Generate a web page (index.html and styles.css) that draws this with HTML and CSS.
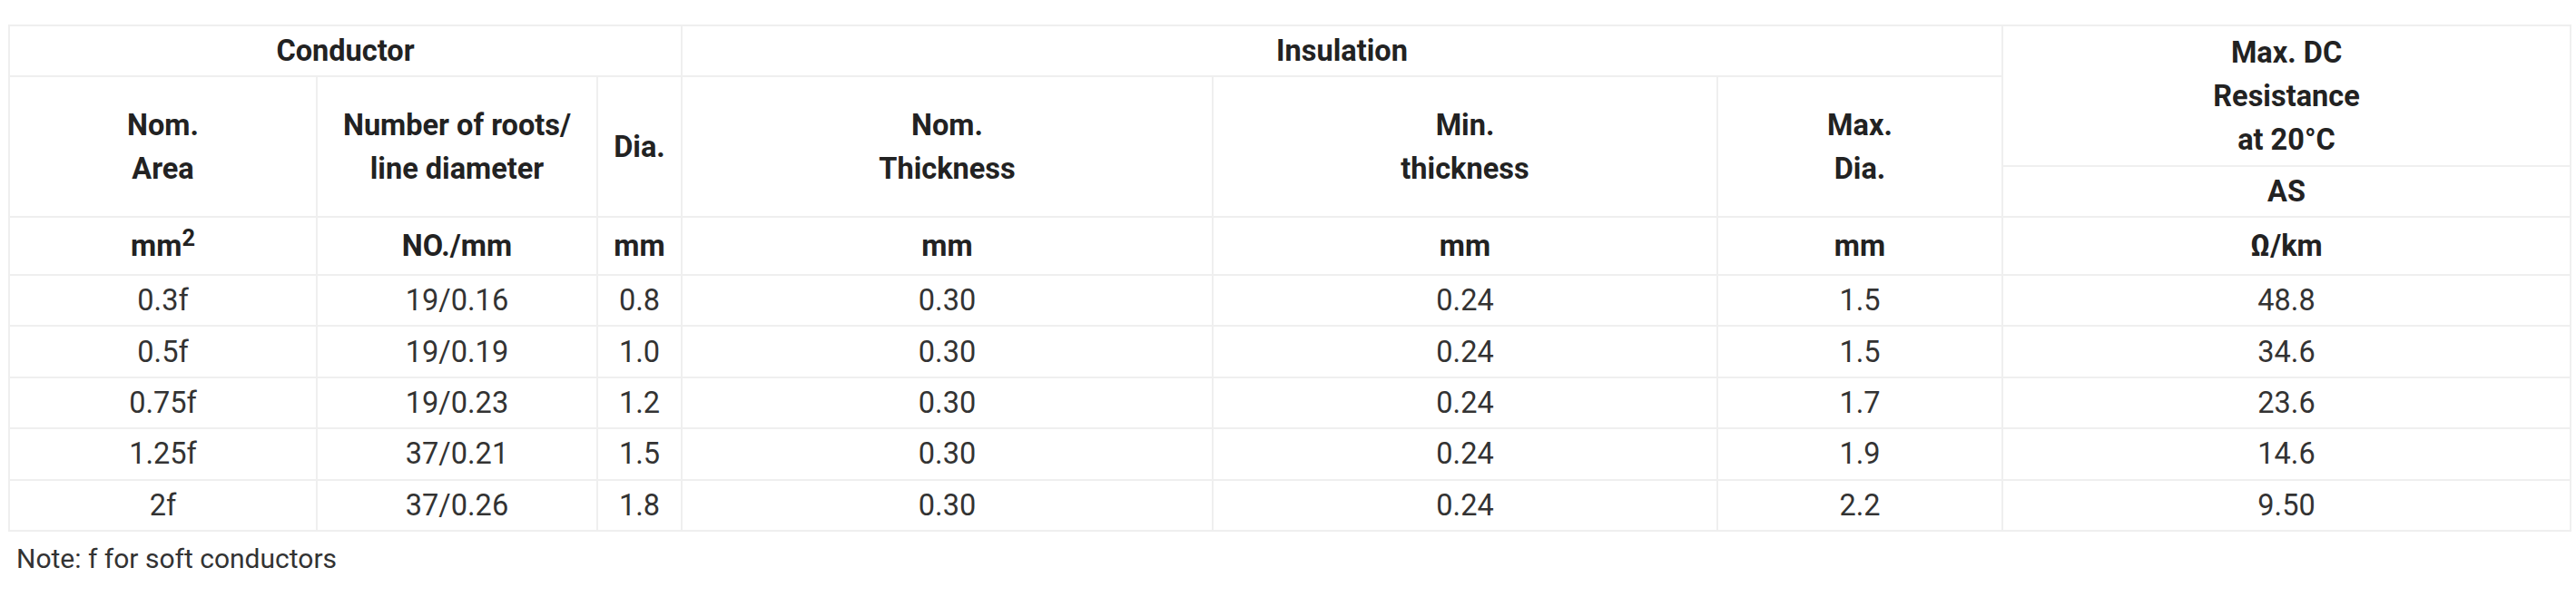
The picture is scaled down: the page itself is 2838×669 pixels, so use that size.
FILE: index.html
```html
<!DOCTYPE html>
<html lang="en">
<head>
<meta charset="utf-8">
<title>Cable specification</title>
<link rel="stylesheet" href="styles.css">
</head>
<body>
<div class="page">
  <table class="spec">
    <colgroup>
      <col class="c1"><col class="c2"><col class="c3"><col class="c4"><col class="c5"><col class="c6"><col class="c7">
    </colgroup>
    <thead>
      <tr class="r1">
        <th colspan="3">Conductor</th>
        <th colspan="3">Insulation</th>
        <th rowspan="2" class="multi">Max. DC<br>Resistance<br>at 20°C</th>
      </tr>
      <tr class="r2">
        <th rowspan="2" class="multi">Nom.<br>Area</th>
        <th rowspan="2" class="multi">Number of roots/<br>line diameter</th>
        <th rowspan="2">Dia.</th>
        <th rowspan="2" class="multi">Nom.<br>Thickness</th>
        <th rowspan="2" class="multi">Min.<br>thickness</th>
        <th rowspan="2" class="multi">Max.<br>Dia.</th>
      </tr>
      <tr class="r3">
        <th>AS</th>
      </tr>
      <tr class="units">
        <th>mm<sup>2</sup></th>
        <th>NO./mm</th>
        <th>mm</th>
        <th>mm</th>
        <th>mm</th>
        <th>mm</th>
        <th>Ω/km</th>
      </tr>
    </thead>
    <tbody>
      <tr><td>0.3f</td><td>19/0.16</td><td>0.8</td><td>0.30</td><td>0.24</td><td>1.5</td><td>48.8</td></tr>
      <tr><td>0.5f</td><td>19/0.19</td><td>1.0</td><td>0.30</td><td>0.24</td><td>1.5</td><td>34.6</td></tr>
      <tr><td>0.75f</td><td>19/0.23</td><td>1.2</td><td>0.30</td><td>0.24</td><td>1.7</td><td>23.6</td></tr>
      <tr><td>1.25f</td><td>37/0.21</td><td>1.5</td><td>0.30</td><td>0.24</td><td>1.9</td><td>14.6</td></tr>
      <tr><td>2f</td><td>37/0.26</td><td>1.8</td><td>0.30</td><td>0.24</td><td>2.2</td><td>9.50</td></tr>
    </tbody>
  </table>
  <p class="note">Note: f for soft conductors</p>
</div>
</body>
</html>
```

FILE: styles.css
```css
html, body {
  margin: 0;
  padding: 0;
  background: #ffffff;
}

.page {
  padding: 27px 0 0 9px;
  font-family: Roboto, "Liberation Sans", Arial, sans-serif;
  font-size: 30px;
  color: #333333;
}

.spec {
  border-collapse: collapse;
  table-layout: fixed;
  width: 2822px;
  font-size: 32.5px;
}

.c1 { width: 339px; }
.c2 { width: 309px; }
.c3 { width: 93px; }
.c4 { width: 585px; }
.c5 { width: 556px; }
.c6 { width: 314px; }
.c7 { width: 626px; }

.spec th,
.spec td {
  border: 2px solid #efefef;
  padding: 0;
  text-align: center;
  vertical-align: middle;
  line-height: 48px;
}

.spec th {
  font-weight: 700;
  color: #222222;
}

.spec td {
  font-weight: 400;
  color: #333333;
}

.r1 { height: 56px; }
.r2 { height: 99px; }
.r3 { height: 56px; }
.units { height: 64px; }
.spec tbody tr { height: 56.4px; }

.spec sup {
  font-size: 0.78em;
  line-height: 0;
  vertical-align: 0.45em;
}

.note {
  margin: 6px 0 0 9px;
  line-height: 48px;
  color: #333333;
}
```
